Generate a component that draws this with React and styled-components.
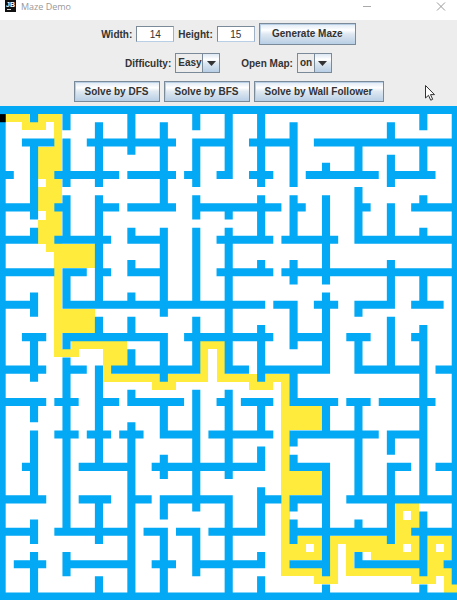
import React from "react";
import styled, { createGlobalStyle } from "styled-components";

const GlobalStyle = createGlobalStyle`
  *, *::before, *::after { box-sizing: border-box; }
  body {
    margin: 0;
    background: #fff;
    font-family: "Liberation Sans", Arial, sans-serif;
    font-size: 10px;
    color: #333;
  }
`;

const Window = styled.div`
  position: relative;
  min-height: 100vh;
  overflow: hidden;
`;

const TitleBar = styled.header`
  display: flex;
  align-items: flex-start;
  height: 20px;
  padding: 0 11px 0 5px;
  background: #fff;
`;

const AppIcon = styled.svg`
  flex: none;
  width: 11px;
  height: 12px;
`;

const Title = styled.h1`
  flex: 1;
  margin: 0 0 0 5px;
  font: 400 9px/14px "Open Sans", "Noto Sans", sans-serif;
  color: #999;
`;

const WindowButton = styled.button`
  width: 10px;
  height: 13px;
  margin-left: ${(p) => (p.$spaced ? "64px" : "0")};
  padding: 0;
  border: 0;
  background: none;

  svg { display: block; }
`;

const Controls = styled.form`
  display: flex;
  flex-direction: column;
  align-items: center;
  gap: 8px;
  height: 86px;
  padding-top: 3px;
  background: #ededed;
  font-weight: 700;
`;

const ControlRow = styled.div`
  display: flex;
  justify-content: center;
  align-items: center;
  gap: ${(p) => p.$gap || 4}px;
  height: ${(p) => p.$height || 21}px;
`;

const Field = styled.div`
  display: flex;
  align-items: center;
  gap: 4px;
`;

const NumberBox = styled.input`
  width: 38px;
  height: 16px;
  padding: 0;
  border: 1px solid #7a8a99;
  border-right-color: #9fb2c6;
  border-bottom-color: #b8cfe5;
  background: #fff;
  color: #333;
  font: 400 10px/14px "Liberation Sans", Arial, sans-serif;
  text-align: center;
`;

const MetalButton = styled.button`
  width: ${(p) => p.$width}px;
  height: ${(p) => p.$height || 21}px;
  padding: 0;
  border: 1px solid #7a8a99;
  box-shadow: inset 1px 1px 0 #b8cfe5;
  background: linear-gradient(#dde8f3 0%, #fff 30%, #dfe8f1 50%, #b8cfe5 100%);
  color: #333;
  font: 700 10px/12px "Liberation Sans", Arial, sans-serif;
  white-space: nowrap;
`;

const ComboFrame = styled.span`
  display: grid;
  grid-template-columns: 1fr 17px;
  width: ${(p) => p.$width}px;
  height: 20px;
  border: 1px solid #7a8a99;
  background: #ededed;
`;

const ComboSelect = styled.select`
  grid-area: 1 / 1 / 2 / 3;
  appearance: none;
  width: 100%;
  height: 18px;
  padding: 0 0 0 2px;
  border: 0;
  background: none;
  color: #333;
  font: 700 10px/18px "Liberation Sans", Arial, sans-serif;
`;

const ComboArrow = styled.span`
  grid-area: 1 / 2;
  display: flex;
  align-items: center;
  justify-content: center;
  pointer-events: none;
  border-left: 1px solid #7a8a99;
  background: linear-gradient(#dde8f3 0%, #fff 30%, #dfe8f1 50%, #b8cfe5 100%);
`;

const MazeDrawing = styled.svg`
  display: block;
  width: 100%;
  background: #fff;
`;

const Pointer = styled.svg`
  position: absolute;
  top: 84px;
  right: 20px;
  width: 13px;
  height: 18px;
  pointer-events: none;
`;

// Wall runs as [start, end) in grid cells, keyed by row.
const horizontalWalls = {
  0: [[0, 57]],
  4: [[3, 7], [11, 22], [24, 29], [31, 37], [39, 57]],
  8: [[0, 2], [7, 15], [16, 22], [23, 25], [27, 29], [31, 34], [38, 47], [48, 54]],
  12: [[0, 5], [7, 9], [12, 15], [16, 22], [24, 35], [36, 38], [44, 46], [51, 57]],
  16: [[0, 5], [7, 14], [16, 21], [27, 34], [35, 42], [44, 57]],
  20: [[0, 7], [8, 11], [12, 14], [16, 21], [27, 34], [35, 57]],
  24: [[0, 5], [8, 33], [34, 37], [39, 42], [44, 49], [51, 55]],
  28: [[3, 6], [8, 21], [23, 34], [36, 41], [43, 46], [51, 53]],
  32: [[0, 6], [8, 11], [14, 25], [28, 31], [32, 41], [44, 53], [54, 57]],
  36: [[0, 6], [7, 10], [12, 15], [16, 23], [27, 29], [30, 34], [36, 42], [43, 46], [47, 54]],
  40: [[7, 10], [11, 14], [15, 18], [20, 25], [26, 34], [36, 47], [48, 53]],
  44: [[3, 5], [10, 17], [19, 33], [36, 41], [48, 51], [54, 57]],
  48: [[0, 6], [10, 14], [16, 19], [20, 29], [32, 35], [36, 41], [43, 57]],
  52: [[0, 5], [7, 17], [18, 21], [22, 25], [26, 33], [36, 49], [51, 57]],
  56: [[2, 6], [8, 17], [19, 22], [24, 33], [36, 41], [44, 53], [55, 57]],
  60: [[0, 57]],
};

// Wall runs as [start, end) in grid cells, keyed by column.
const verticalWalls = {
  0: [[0, 61]],
  4: [[0, 2], [4, 14], [15, 17], [23, 26], [28, 34], [36, 39], [40, 49], [51, 54], [55, 61]],
  8: [[0, 3], [4, 10], [11, 17], [20, 25], [28, 30], [31, 53], [55, 58]],
  12: [[2, 10], [11, 25], [26, 29], [32, 45], [48, 54], [58, 61]],
  16: [[0, 6], [15, 17], [19, 21], [23, 25], [26, 29], [30, 33], [35, 37], [39, 61]],
  20: [[2, 13], [15, 26], [28, 34], [36, 41], [43, 46], [48, 51], [52, 61]],
  24: [[0, 3], [4, 10], [11, 14], [15, 25], [26, 33], [35, 50], [52, 58]],
  28: [[0, 9], [12, 14], [15, 33], [35, 46], [48, 61]],
  32: [[0, 10], [11, 17], [19, 21], [27, 34], [36, 41], [42, 45], [47, 53], [55, 57], [58, 61]],
  36: [[2, 10], [11, 17], [19, 22], [24, 30], [32, 37], [40, 42], [43, 45], [48, 50], [51, 54]],
  40: [[7, 9], [11, 22], [23, 33], [36, 41], [44, 58], [59, 61]],
  44: [[4, 9], [10, 17], [24, 26], [28, 33], [36, 49], [51, 53], [55, 57]],
  48: [[2, 5], [6, 10], [12, 17], [19, 25], [26, 33], [40, 43], [44, 54]],
  52: [[0, 3], [4, 9], [11, 13], [15, 17], [20, 25], [27, 49], [50, 58], [59, 61]],
  56: [[0, 59], [60, 61]],
};

// Visited cells as [column, row, width, height].
const trail = [
  [1, 1, 7, 1], [3, 2, 3, 1], [7, 2, 1, 3], [5, 5, 3, 4], [6, 9, 2, 1],
  [5, 10, 3, 3], [6, 13, 2, 1], [5, 14, 3, 3], [6, 17, 6, 1], [7, 18, 5, 2],
  [7, 20, 1, 5], [7, 25, 5, 3], [7, 28, 1, 3], [8, 30, 2, 1], [9, 29, 7, 1],
  [13, 30, 3, 2], [13, 32, 1, 1], [13, 33, 13, 1], [19, 34, 3, 1],
  [25, 29, 1, 4], [26, 29, 1, 1], [27, 29, 1, 5], [28, 33, 8, 1],
  [31, 34, 3, 1], [35, 34, 1, 24], [36, 37, 4, 3], [36, 45, 4, 3],
  [37, 53, 3, 1], [36, 54, 2, 1], [39, 54, 1, 1], [36, 55, 4, 1],
  [36, 57, 4, 1], [39, 58, 3, 1], [41, 53, 1, 5], [42, 53, 6, 1],
  [43, 54, 1, 4], [44, 54, 6, 1], [51, 54, 1, 1], [46, 55, 6, 1],
  [44, 57, 8, 1], [51, 58, 3, 1], [49, 49, 3, 1], [49, 50, 1, 1],
  [51, 50, 1, 1], [49, 51, 3, 1], [49, 52, 2, 1], [49, 53, 3, 1],
  [53, 53, 3, 1], [53, 54, 1, 1], [55, 54, 1, 1], [53, 55, 3, 1],
  [53, 56, 2, 1], [53, 57, 3, 1], [55, 58, 1, 1], [55, 59, 2, 1],
];

const cellPath = ([x, y, w, h]) => `M${x} ${y}h${w}v${h}h${-w}z`;

const wallPath = [
  ...Object.entries(horizontalWalls).flatMap(([row, runs]) =>
    runs.map(([a, b]) => cellPath([a, Number(row), b - a, 1]))
  ),
  ...Object.entries(verticalWalls).flatMap(([col, runs]) =>
    runs.map(([a, b]) => cellPath([Number(col), a, 1, b - a]))
  ),
].join("");

function Maze() {
  return (
    <MazeDrawing viewBox="0.3 0 56.35 60.9" role="img" aria-label="Maze">
      <path d={trail.map(cellPath).join("")} fill="#ffeb3b" shapeRendering="crispEdges" />
      <path d={wallPath} fill="#03a9f4" />
      <path d={cellPath([0, 1, 1, 1])} fill="#000" />
    </MazeDrawing>
  );
}

function Combo({ id, options, width }) {
  return (
    <ComboFrame $width={width}>
      <ComboSelect id={id} defaultValue={options[0]}>
        {options.map((o) => (
          <option key={o}>{o}</option>
        ))}
      </ComboSelect>
      <ComboArrow>
        <svg width="9" height="5" viewBox="0 0 9 5" aria-hidden="true">
          <path d="M0 0h9L4.5 5z" fill="#333" />
        </svg>
      </ComboArrow>
    </ComboFrame>
  );
}

export default function App() {
  return (
    <Window>
      <GlobalStyle />
      <TitleBar>
        <AppIcon viewBox="0 0 11 12" aria-hidden="true">
          <rect width="11" height="12" fill="#111" />
          <text x="1" y="7" fontSize="7" fontWeight="700" fill="#fff">JB</text>
          <path d="M2 9.5h4" stroke="#ddd" />
        </AppIcon>
        <Title>Maze Demo</Title>
        <WindowButton type="button" aria-label="Minimize">
          <svg width="10" height="13"><path d="M1 6.5h8" stroke="#aaa" /></svg>
        </WindowButton>
        <WindowButton type="button" aria-label="Close" $spaced>
          <svg width="10" height="13"><path d="M1 2.5l8 8M9 2.5l-8 8" stroke="#999" /></svg>
        </WindowButton>
      </TitleBar>
      <Controls onSubmit={(e) => e.preventDefault()}>
        <ControlRow $height={22}>
          <Field>
            <label htmlFor="maze-width">Width:</label>
            <NumberBox id="maze-width" defaultValue="14" />
          </Field>
          <Field>
            <label htmlFor="maze-height">Height:</label>
            <NumberBox id="maze-height" defaultValue="15" />
          </Field>
          <MetalButton type="submit" $width={97} $height={22}>Generate Maze</MetalButton>
        </ControlRow>
        <ControlRow $gap={21} $height={20}>
          <Field>
            <label htmlFor="difficulty">Difficulty:</label>
            <Combo id="difficulty" options={["Easy", "Hard"]} width={45} />
          </Field>
          <Field>
            <label htmlFor="open-map">Open Map:</label>
            <Combo id="open-map" options={["on", "off"]} width={35} />
          </Field>
        </ControlRow>
        <ControlRow>
          <MetalButton type="button" $width={86}>Solve by DFS</MetalButton>
          <MetalButton type="button" $width={86}>Solve by BFS</MetalButton>
          <MetalButton type="button" $width={130}>Solve by Wall Follower</MetalButton>
        </ControlRow>
      </Controls>
      <Maze />
      <Pointer viewBox="0 0 13 18" aria-hidden="true">
        <path d="M1.500 1.500v12.500l3-2.700 2.200 4.900 2-.9-2.200-4.700h4z" fill="#fff" stroke="#333" />
      </Pointer>
    </Window>
  );
}
